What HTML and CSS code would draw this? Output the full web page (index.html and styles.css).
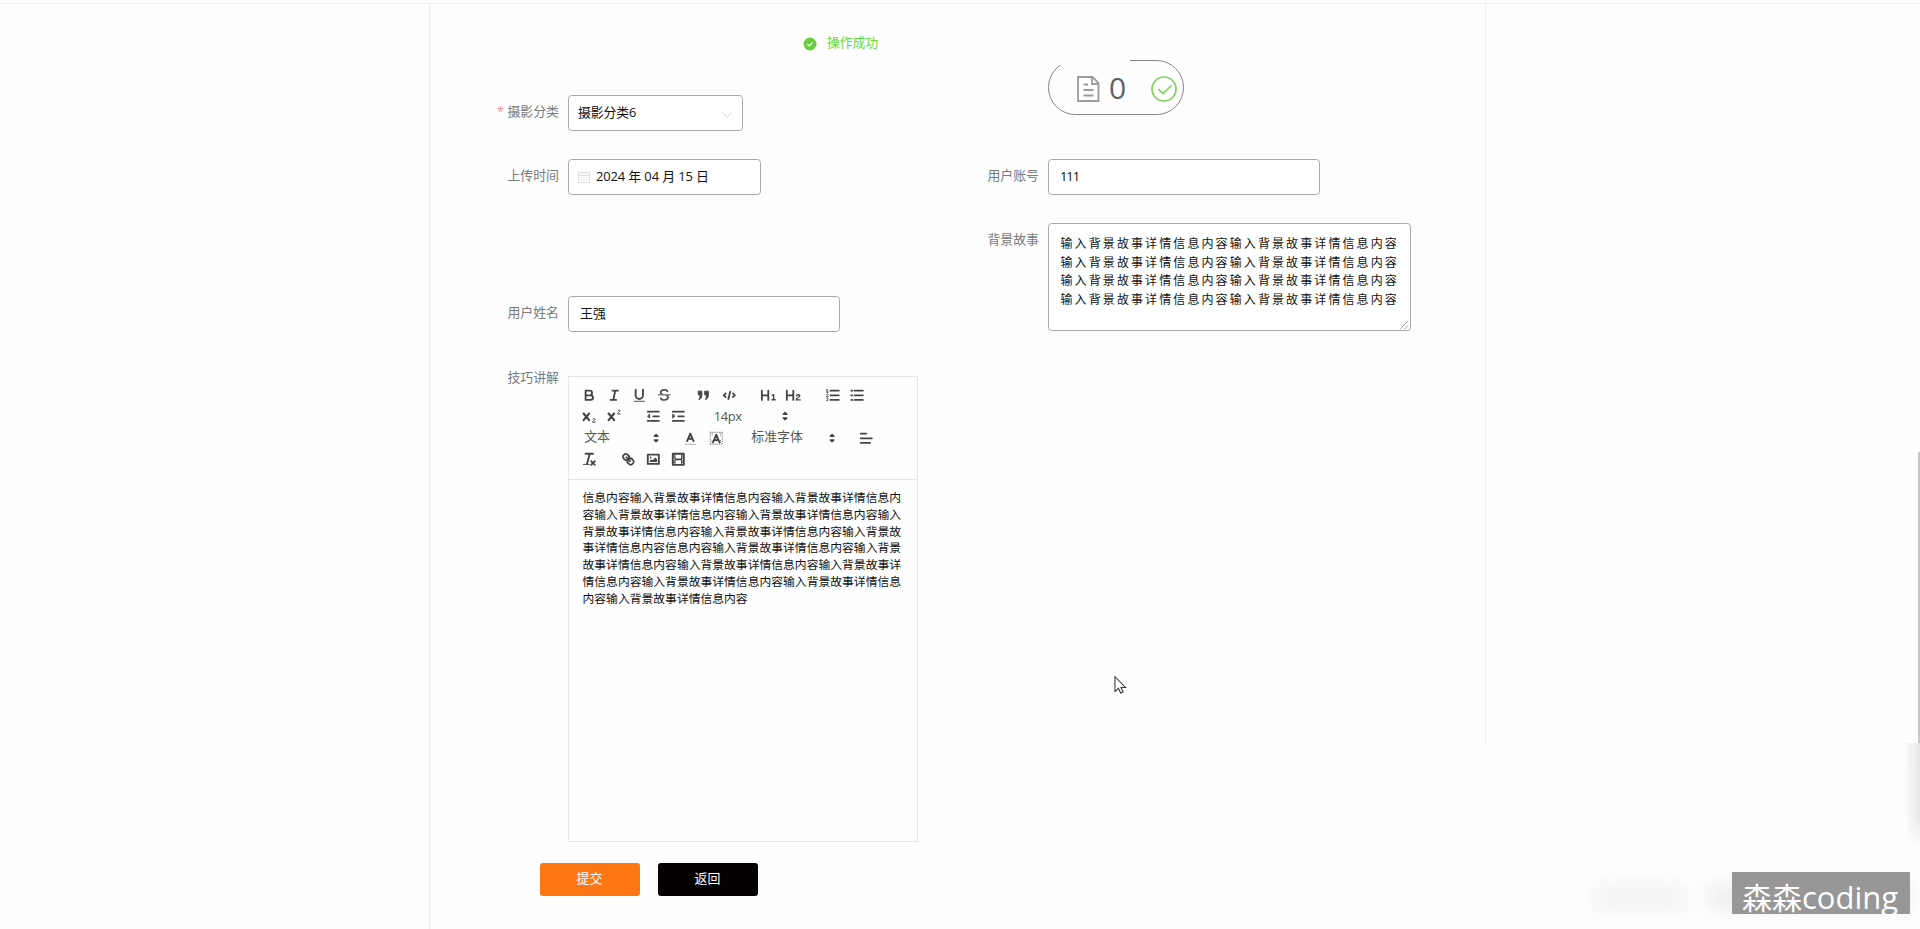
FILE: index.html
```html
<!DOCTYPE html>
<html lang="zh-CN">
<head>
<meta charset="utf-8">
<title>摄影作品</title>
<link rel="stylesheet" href="styles.css">
</head>
<body>
<main class="panel">
  <form class="form">
    <div class="col col-left">
      <div class="item">
        <label class="label"><span class="req">*</span> 摄影分类</label>
        <div class="box select"><span class="sel-text">摄影分类6</span>
          <svg class="chev" viewBox="0 0 12 12"><path d="M1.5 3.5 6 8.3l4.5-4.8" fill="none" stroke="#d3d6dc"/></svg>
        </div>
      </div>
      <div class="item">
        <label class="label">上传时间</label>
        <div class="box date">
          <svg class="cal" viewBox="0 0 12 12"><path d="M.5 1.5h11v10H.5zM.5 4.5h11M3.5 0v2.5M8.5 0v2.5M2.500 7h1.300M5.300 7h1.400M8.200 7h1.300M2.500 9.300h1.300M5.300 9.300h1.400M8.200 9.300h1.300" fill="none" stroke="#d9dde3" stroke-width=".9"/></svg>
          <span class="date-text">2024 年 04 月 15 日</span>
        </div>
      </div>
      <div class="item item-name">
        <label class="label">用户姓名</label>
        <div class="box input">王强</div>
      </div>
      <div class="item item-editor">
        <label class="label">技巧讲解</label>
        <div class="editor">
          <div class="toolbar">
            <div class="tr">
              <div class="grp">
                <span class="tb"><svg viewBox="0 0 18 18"><path class="s" d="M5 4h4.500a2.500 2.500 0 0 1 0 5H5zM5 9h5.500a2.500 2.500 0 0 1 0 5H5z"/></svg></span>
                <span class="tb"><svg viewBox="0 0 18 18"><path class="s" d="M7 4h6M5 14h6M8 14l2-10"/></svg></span>
                <span class="tb"><svg viewBox="0 0 18 18"><path class="s" d="M5 3v6a4 4 0 0 0 8 0V3"/><rect class="f" x="3" y="15" width="12" height="1"/></svg></span>
                <span class="tb"><svg viewBox="0 0 18 18"><path class="s thin" d="M15.500 8.500h-13"/><path class="f" d="M9 8C7 7.500 6 6.700 6 5.800 6 4.700 7.200 4 9 4c1.600 0 2.700.6 3 1.600l1.600-.6C13 3.200 11.300 2.300 9 2.300c-2.900 0-4.800 1.500-4.800 3.500 0 1 .5 1.700 1.200 2.200zM9.500 9c1.800.5 2.600 1.200 2.600 2.200 0 1.200-1.200 2-3.100 2-1.700 0-2.900-.7-3.200-1.900l-1.700.5C4.600 13.800 6.400 15 9 15c3 0 5-1.500 5-3.800 0-.9-.3-1.600-.9-2.200z"/></svg></span>
              </div>
              <div class="grp">
                <span class="tb"><svg viewBox="0 0 18 18"><path class="f quote" d="M3.500 4.500h4v4c0 3-1.200 4.500-3.300 5.300C5.300 12 5.500 10.500 5.300 8.500H3.500zM10.500 4.500h4v4c0 3-1.200 4.500-3.300 5.300 1.100-1.800 1.300-3.300 1.100-5.300h-1.800z"/></svg></span>
                <span class="tb"><svg viewBox="0 0 18 18"><path class="s" d="M5 7 3 9l2 2M13 7l2 2-2 2M10 5l-2 8"/></svg></span>
              </div>
              <div class="grp">
                <span class="tb"><svg viewBox="0 0 18 18"><path class="f" d="M10 4v10a1 1 0 0 1-2 0v-4H3v4a1 1 0 0 1-2 0V4a1 1 0 0 1 2 0v4h5V4a1 1 0 0 1 2 0z"/><path class="s mid" d="m13.300 8.900 1.500-.5v5.500M13 13.900h3.500"/></svg></span>
                <span class="tb"><svg viewBox="0 0 18 18"><path class="f" d="M9 3a1 1 0 0 0-1 1v4H3V4a1 1 0 0 0-2 0v10a1 1 0 0 0 2 0v-4h5v4a1 1 0 0 0 2 0V4a1 1 0 0 0-1-1z"/><path class="s mid" d="M16.500 14h-4.300c0-2.400 3.800-2.700 3.800-4.400 0-1.500-2.700-1.700-3.600-.2"/></svg></span>
              </div>
              <div class="grp">
                <span class="tb"><svg viewBox="0 0 18 18"><path class="s" d="M7 4h9M7 9h9M7 14h9"/><path class="s thin" d="M2.500 5.500h2M3.500 5.500v-3l-1 .5M4.500 10.500h-2c0-1.200 1.900-1.500 1.900-2.300 0-.9-1.400-.9-1.700-.1M2.500 14.600c.5.600 1.800.4 1.800-.5s-1-1-1-1 .9 0 .9-.8-1.200-.9-1.600-.3"/></svg></span>
                <span class="tb"><svg viewBox="0 0 18 18"><path class="s" d="M6 4h9M6 9h9M6 14h9M2.500 4h1M2.500 9h1M2.500 14h1"/></svg></span>
              </div>
            </div>
            <div class="tr">
              <div class="grp">
                <span class="tb"><svg viewBox="0 0 18 18"><path class="s heavy" d="m2.800 6 6 7.200M8.800 6l-6 7.200"/><path class="s thin" d="M15.500 15.500h-3c0-1.700 2.700-2 2.700-3.300 0-1.200-2-1.200-2.500-.2"/></svg></span>
                <span class="tb"><svg viewBox="0 0 18 18"><path class="s heavy" d="m2.800 6 6 7.200M8.800 6l-6 7.200"/><path class="s thin" d="M15.500 6.500h-3c0-1.700 2.700-2 2.700-3.300 0-1.200-2-1.200-2.500-.2"/></svg></span>
              </div>
              <div class="grp">
                <span class="tb"><svg viewBox="0 0 18 18"><path class="s" d="M3 14h12M3 4h12M9 9h6"/><path class="f s" d="M5 7v4L3 9z"/></svg></span>
                <span class="tb"><svg viewBox="0 0 18 18"><path class="s" d="M3 14h12M3 4h12M9 9h6"/><path class="f s" d="M3 7v4l2-2z"/></svg></span>
              </div>
              <div class="pick pick-size"><span>14px</span><svg viewBox="0 0 18 18"><path class="f s arr" d="m7 11 2 2 2-2zM7 7l2-2 2 2z"/></svg></div>
            </div>
            <div class="tr">
              <div class="pick"><span>文本</span><svg viewBox="0 0 18 18"><path class="f s arr" d="m7 11 2 2 2-2zM7 7l2-2 2 2z"/></svg></div>
              <div class="grp">
                <span class="tb"><svg viewBox="0 0 18 18"><path d="M3 15.500h12" stroke="#aaa"/><path class="s" d="M5.500 12 9 4l3.500 8M6.500 9.500h5"/></svg></span>
                <span class="tb"><svg viewBox="0 0 18 18"><path d="M2.500 2v14M15.500 2v14M2 2.500h14M2 15.500h14M4.500 3v4M13.500 3v4M13.500 11v4M4.500 11v4" fill="none" stroke="#666" stroke-dasharray="1 1"/><path class="s" d="M5.500 13.500 9 5l3.500 8.500M6.700 11h4.600"/></svg></span>
              </div>
              <div class="pick pick-font"><span>标准字体</span><svg viewBox="0 0 18 18"><path class="f s arr" d="m7 11 2 2 2-2zM7 7l2-2 2 2z"/></svg></div>
              <div class="grp">
                <span class="tb"><svg viewBox="0 0 18 18"><path class="s" d="M15 9H3M13 14H3M9 4H3"/></svg></span>
              </div>
            </div>
            <div class="tr">
              <div class="grp">
                <span class="tb"><svg viewBox="0 0 18 18"><path class="s" d="M5 3h8M6.500 14 9.500 3M11 11l4 4M15 11l-4 4"/><rect class="f" x="2" y="14" width="7.500" height="1"/></svg></span>
              </div>
              <div class="grp">
                <span class="tb"><svg viewBox="0 0 18 18"><path class="s" d="m7 7 4 4"/><path class="s" d="M8.900 4.577a3.476 3.476 0 0 1 .360 4.679A3.476 3.476 0 0 1 4.577 8.900C3.185 7.500 2.035 6.400 4.217 4.217S7.500 3.185 8.900 4.577zM13.423 9.100a3.476 3.476 0 0 0-4.679-.360 3.476 3.476 0 0 0 .360 4.679c1.392 1.392 2.500 2.542 4.679.360s1.032-3.287-.360-4.679z"/></svg></span>
                <span class="tb"><svg viewBox="0 0 18 18"><rect class="s" x="3" y="4" width="12" height="10"/><circle class="f" cx="6" cy="7" r="1"/><path class="f" d="M5 12v-1l2-2 1.500 1L11 7l2 2v3z"/></svg></span>
                <span class="tb"><svg viewBox="0 0 18 18"><rect class="s" x="3" y="3" width="12" height="12"/><path class="f" d="M5 3h1v12H5zM12 3h1v12h-1zM5 8h8v2H5zM3 5h3v1H3zM3 7h3v1H3zM3 10h3v1H3zM3 12h3v1H3zM12 5h3v1h-3zM12 7h3v1h-3zM12 10h3v1h-3zM12 12h3v1h-3z"/></svg></span>
              </div>
            </div>
          </div>
          <div class="content">信息内容输入背景故事详情信息内容输入背景故事详情信息内<br>容输入背景故事详情信息内容输入背景故事详情信息内容输入<br>背景故事详情信息内容输入背景故事详情信息内容输入背景故<br>事详情信息内容信息内容输入背景故事详情信息内容输入背景<br>故事详情信息内容输入背景故事详情信息内容输入背景故事详<br>情信息内容输入背景故事详情信息内容输入背景故事详情信息<br>内容输入背景故事详情信息内容</div>
        </div>
      </div>
      <div class="actions"><span class="btn submit">提交</span><span class="btn back">返回</span></div>
    </div>
    <div class="col col-right">
      <div class="item item-upload">
        <div class="upload">
          <svg class="doc" viewBox="0 0 24 28"><path d="M2 2h14.500l6 6v18H2zM16 2v7h6.500M7.500 9.500h4.500M7.500 15h10M7.500 20.500h10" fill="none" stroke="#989ba1" stroke-width="1.800"/></svg>
          <span class="count">0</span>
          <svg class="ok" viewBox="0 0 28 28"><circle cx="14" cy="14" r="12" fill="none" stroke="#7bd35a" stroke-width="1.700"/><path d="m8.300 14 4.700 4.500 8.500-8" fill="none" stroke="#7bd35a" stroke-width="1.700"/></svg>
        </div>
      </div>
      <div class="item">
        <label class="label">用户账号</label>
        <div class="box input num">111</div>
      </div>
      <div class="item">
        <label class="label">背景故事</label>
        <div class="box area">输入背景故事详情信息内容输入背景故事详情信息内容<br>输入背景故事详情信息内容输入背景故事详情信息内容<br>输入背景故事详情信息内容输入背景故事详情信息内容<br>输入背景故事详情信息内容输入背景故事详情信息内容
          <svg class="grip" viewBox="0 0 10 10"><path d="M1 9 9 1M5.500 9 9 5.500" stroke="#999" fill="none"/></svg>
        </div>
      </div>
    </div>
  </form>
</main>
<div class="toast">
  <svg viewBox="0 0 14 14"><circle cx="7" cy="7" r="6.500" fill="#67cf3a"/><path d="m4.300 7 2 1.900 3.500-3.600" fill="none" stroke="#fff" stroke-width="1.200"/></svg>
  <span>操作成功</span>
</div>
<svg class="cursor" viewBox="0 0 14 20"><path d="M1 1v16l3.800-3.300 2.400 5 2.600-1.200-2.300-4.800h5z" fill="#fff" stroke="#333" stroke-width="1.100"/></svg>
<div class="scroll"></div>
<div class="haze"></div>
<div class="smudge"></div>
<div class="smudge smudge-b"></div>
<div class="mark"><span class="mark-cn">森森</span><span class="mark-en">coding</span></div>
</body>
</html>
```
FILE: styles.css
```css
* { box-sizing: border-box; }
body {
  margin: 0;
  height: 929px;
  overflow: hidden;
  position: relative;
  background: #fefefe;
  padding-top: 3px;
  font-family: "Open Sans", "Noto Sans CJK SC", sans-serif;
  font-size: 12.9px;
  color: #111;
}
svg { display: block; flex: none; }
.panel {
  height: 926px;
  border-top: 1px solid #eee;
}
.form {
  display: flex;
  width: 1057px;
  height: 925px;
  margin-left: 429px;
  padding-left: 50px;
  border-left: 1px solid #eaeaea;
  background: linear-gradient(#eee, #eee) right top / 1px 739px no-repeat;
}
.col { width: 480px; display: flex; flex-direction: column; }
.col-left { padding-top: 91px; }
.col-right { padding-top: 56px; }
.item { display: flex; margin-bottom: 28px; }
.label {
  width: 88px;
  padding-right: 9px;
  line-height: 33px;
  text-align: right;
  color: #787b7f;
  white-space: nowrap;
}
.req { color: #f28c8c; }
.box {
  height: 36px;
  border: 1px solid #a9a9a9;
  border-radius: 3.500px;
  background: #fff;
  line-height: 33px;
  white-space: nowrap;
}
.select { width: 175px; display: flex; justify-content: space-between; align-items: center; padding: 0 9px; line-height: 32px; }
.sel-text { padding-bottom: 3px; letter-spacing: -0.150px; }
.chev { width: 12px; height: 12px; margin-top: 4px; }
.date { width: 193px; display: flex; align-items: center; padding-left: 9px; }
.cal { width: 12px; height: 12px; margin-right: 6px; }
.date-text { letter-spacing: -0.100px; padding-bottom: 1px; }
.item-name { margin-top: 73px; margin-bottom: 29px; }
.input { width: 272px; padding-left: 11px; }
.num { letter-spacing: -1px; }
.item-editor { margin-bottom: 21px; }
.editor {
  width: 350px;
  height: 466px;
  margin-top: 15px;
  border: 1px solid #e6e6e6;
}
.toolbar { height: 103px; padding: 7.200px; border-bottom: 1px solid #e6e6e6; }
.tr { display: flex; height: 21.600px; gap: 13.700px; align-items: center; }
.grp { display: flex; }
.tb { width: 25.300px; display: flex; justify-content: center; }
.tb svg { width: 16.600px; height: 16.600px; }
.s { stroke: #444; stroke-width: 2; fill: none; stroke-linecap: round; stroke-linejoin: round; }
.f { fill: #444; }
.f.s { fill: #444; stroke-width: 1; }
.f.arr { stroke-width: 1.600; }
.quote { stroke: #444; stroke-width: 1; stroke-linejoin: round; }
.thin { stroke-width: 1; }
.mid { stroke-width: 1.500; }
.heavy { stroke-width: 2.300; }
.pick {
  width: 88.200px;
  padding: 0 0 0 8px;
  display: flex;
  justify-content: space-between;
  align-items: center;
  color: #555;
  line-height: 20px;
}
.pick span { margin-top: -4px; }
.pick svg { width: 16.200px; height: 16.200px; }
.pick-size { padding-left: 9px; }
.pick-size span { letter-spacing: -0.350px; margin-top: -2px; }
.pick-font { width: 98px; padding-left: 9px; }
.content {
  padding: 9px 0 0 13.500px;
  font-size: 11.800px;
  line-height: 16.750px;
  white-space: nowrap;
}
.actions { display: flex; gap: 18px; padding-left: 59.500px; }
.btn {
  width: 100px;
  height: 33px;
  border-radius: 3px;
  text-align: center;
  line-height: 31px;
  color: #fff;
}
.submit { background: #ff7712; }
.back { background: #050000; }
.item-upload { padding-left: 88px; margin-bottom: 44px; }
.upload {
  width: 136px;
  height: 55px;
  border: 1px solid #858585;
  border-radius: 28px;
  display: flex;
  align-items: center;
  padding-left: 27px;
}
.doc { width: 24px; height: 28px; margin-top: 2px; }
.count { margin-left: 9px; font-size: 30px; line-height: 40px; color: #606266; width: 18px; margin-top: 1px; }
.ok { width: 28px; height: 28px; margin-left: 23px; margin-top: 2px; }
.area {
  position: relative;
  width: 363px;
  height: 108px;
  padding: 11px 0 0 11.500px;
  font-size: 12px;
  letter-spacing: 2.100px;
  line-height: 18.700px;
}
.grip { position: absolute; right: 1px; bottom: 0; width: 10px; height: 10px; }
.toast {
  position: absolute;
  left: 785px;
  top: 22px;
  width: 345px;
  height: 43px;
  display: flex;
  align-items: center;
  gap: 10px;
  padding-left: 17px;
  border: 1px solid #fcfdf6;
  background: #fefefe;
  color: #67d83a;
}
.toast svg { width: 14px; height: 14px; margin-top: 1px; }
.toast span { line-height: 20px; margin-top: -3px; letter-spacing: -0.150px; }
.cursor { position: absolute; left: 1114px; top: 675px; width: 13px; height: 20px; }
.scroll { position: absolute; right: 0; top: 452px; width: 2px; height: 291px; background: #c8c8c8; }
.haze {
  position: absolute;
  right: 0;
  top: 743px;
  width: 16px;
  height: 104px;
  background: linear-gradient(to right, rgba(225,225,225,0), #e5e5e5);
  -webkit-mask-image: linear-gradient(#000 70%, transparent);
  mask-image: linear-gradient(#000 70%, transparent);
}
.smudge {
  position: absolute;
  left: 1594px;
  top: 884px;
  width: 92px;
  height: 26px;
  background: #f3f3f3;
  filter: blur(9px);
}
.smudge-b { left: 1708px; width: 204px; background: #eee; }
.mark {
  position: absolute;
  left: 1732px;
  top: 872px;
  width: 178px;
  height: 42px;
  padding-left: 10px;
  display: flex;
  background: #979797;
  color: #fff;
  font-size: 30px;
  line-height: 52px;
  white-space: nowrap;
}
.mark-en { font-size: 31px; line-height: 51px; }
```
